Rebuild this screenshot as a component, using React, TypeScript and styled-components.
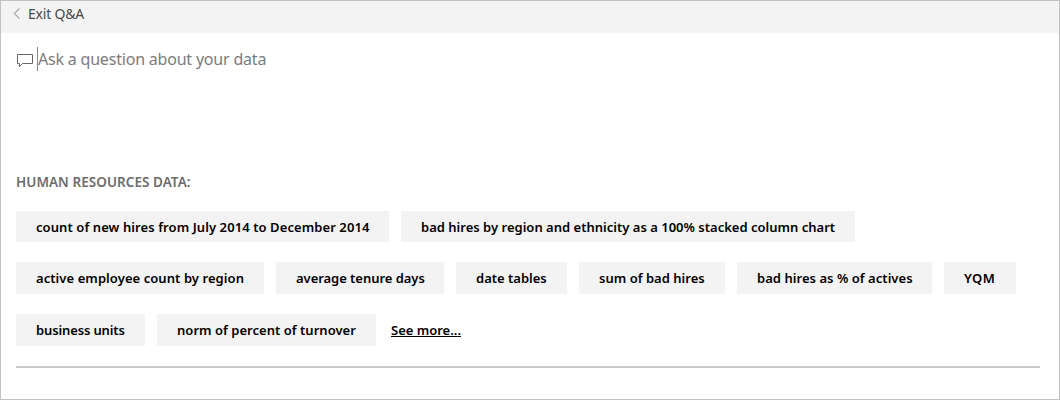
import React from "react";
import styled, { createGlobalStyle } from "styled-components";

const GlobalStyle = createGlobalStyle`
  * { box-sizing: border-box; }
  body { margin: 0; background: #fff; font-family: "Noto Sans", "Open Sans", sans-serif; }
`;

const Frame = styled.main`
  width: 1060px;
  height: 400px;
  border: 1px solid #c2c2c2;
  background: #fff;
  overflow: hidden;
`;

const Header = styled.header`
  height: 32px;
  padding: 0 0 7px 12px;
  display: flex;
  align-items: center;
  gap: 7px;
  background: #f3f3f3;
`;

const ExitLabel = styled.span`
  font-size: 14px;
  line-height: 17px;
  color: #4a4a4a;
  letter-spacing: -0.2px;
`;

const Content = styled.section`
  padding: 14px 19px 0 15px;
`;

const Question = styled.div`
  height: 24px;
  display: flex;
  align-items: center;
  gap: 4px;
`;

const Prompt = styled.span`
  height: 24px;
  border-left: 1px solid #888;
  font-size: 16px;
  line-height: 24px;
  color: #7c7c7c;
  letter-spacing: -0.2px;
`;

const Heading = styled.h2`
  margin: 102px 0 20px;
  font-size: 13.5px;
  line-height: 18px;
  font-weight: 600;
  color: #6c6c6c;
  letter-spacing: 0.05px;
`;

const Row = styled.div<{ $height: number }>`
  height: ${(p) => p.$height}px;
  margin-bottom: 20px;
  display: flex;
  align-items: center;
  gap: 12px;
`;

const Chip = styled.button<{ $width: number; $spacing: number }>`
  width: ${(p) => p.$width}px;
  height: 100%;
  padding: 0 0 0 20px;
  border: 0;
  background: #f3f3f3;
  color: #000;
  font: 600 13px/18px "Noto Sans", sans-serif;
  letter-spacing: ${(p) => p.$spacing}px;
  text-align: left;
  white-space: nowrap;
`;

const MoreLink = styled.a`
  margin-left: 3px;
  color: #000;
  font: 600 13px/18px "Noto Sans", sans-serif;
  text-decoration: underline;
`;

const Divider = styled.hr`
  margin: 0;
  border: 0;
  height: 2px;
  background: #c8c8c8;
`;

const rows = [
  {
    height: 31,
    items: [
      { text: "count of new hires from July 2014 to December 2014", width: 373, spacing: 0.085 },
      { text: "bad hires by region and ethnicity as a 100% stacked column chart", width: 454, spacing: 0.01 },
    ],
  },
  {
    height: 32,
    items: [
      { text: "active employee count by region", width: 248, spacing: 0.07 },
      { text: "average tenure days", width: 168, spacing: -0.04 },
      { text: "date tables", width: 111, spacing: 0 },
      { text: "sum of bad hires", width: 146, spacing: 0.02 },
      { text: "bad hires as % of actives", width: 195, spacing: 0.04 },
      { text: "YQM", width: 72, spacing: 0.5 },
    ],
  },
  {
    height: 32,
    items: [
      { text: "business units", width: 129, spacing: -0.13 },
      { text: "norm of percent of turnover", width: 219, spacing: 0.03 },
    ],
    more: true,
  },
];

export default function App() {
  return (
    <Frame>
      <GlobalStyle />
      <Header>
        <svg width="8" height="11" viewBox="0 0 8 11" fill="none" stroke="#777">
          <path d="M6.3 0.5 L1.3 5.5 L6.3 10.5" />
        </svg>
        <ExitLabel>Exit Q&amp;A</ExitLabel>
      </Header>
      <Content>
        <Question>
          <svg width="17" height="16" viewBox="0 0 17 16" fill="none" stroke="#666">
            <path d="M1.5 3.5 H16.5 V12.5 H6.5 L3.5 15.5 V12.5 H1.5 Z" />
          </svg>
          <Prompt>Ask a question about your data</Prompt>
        </Question>
        <Heading>HUMAN RESOURCES DATA:</Heading>
        {rows.map((row, i) => (
          <Row key={i} $height={row.height}>
            {row.items.map((item) => (
              <Chip key={item.text} $width={item.width} $spacing={item.spacing}>
                {item.text}
              </Chip>
            ))}
            {row.more && <MoreLink>See more...</MoreLink>}
          </Row>
        ))}
        <Divider />
      </Content>
    </Frame>
  );
}
